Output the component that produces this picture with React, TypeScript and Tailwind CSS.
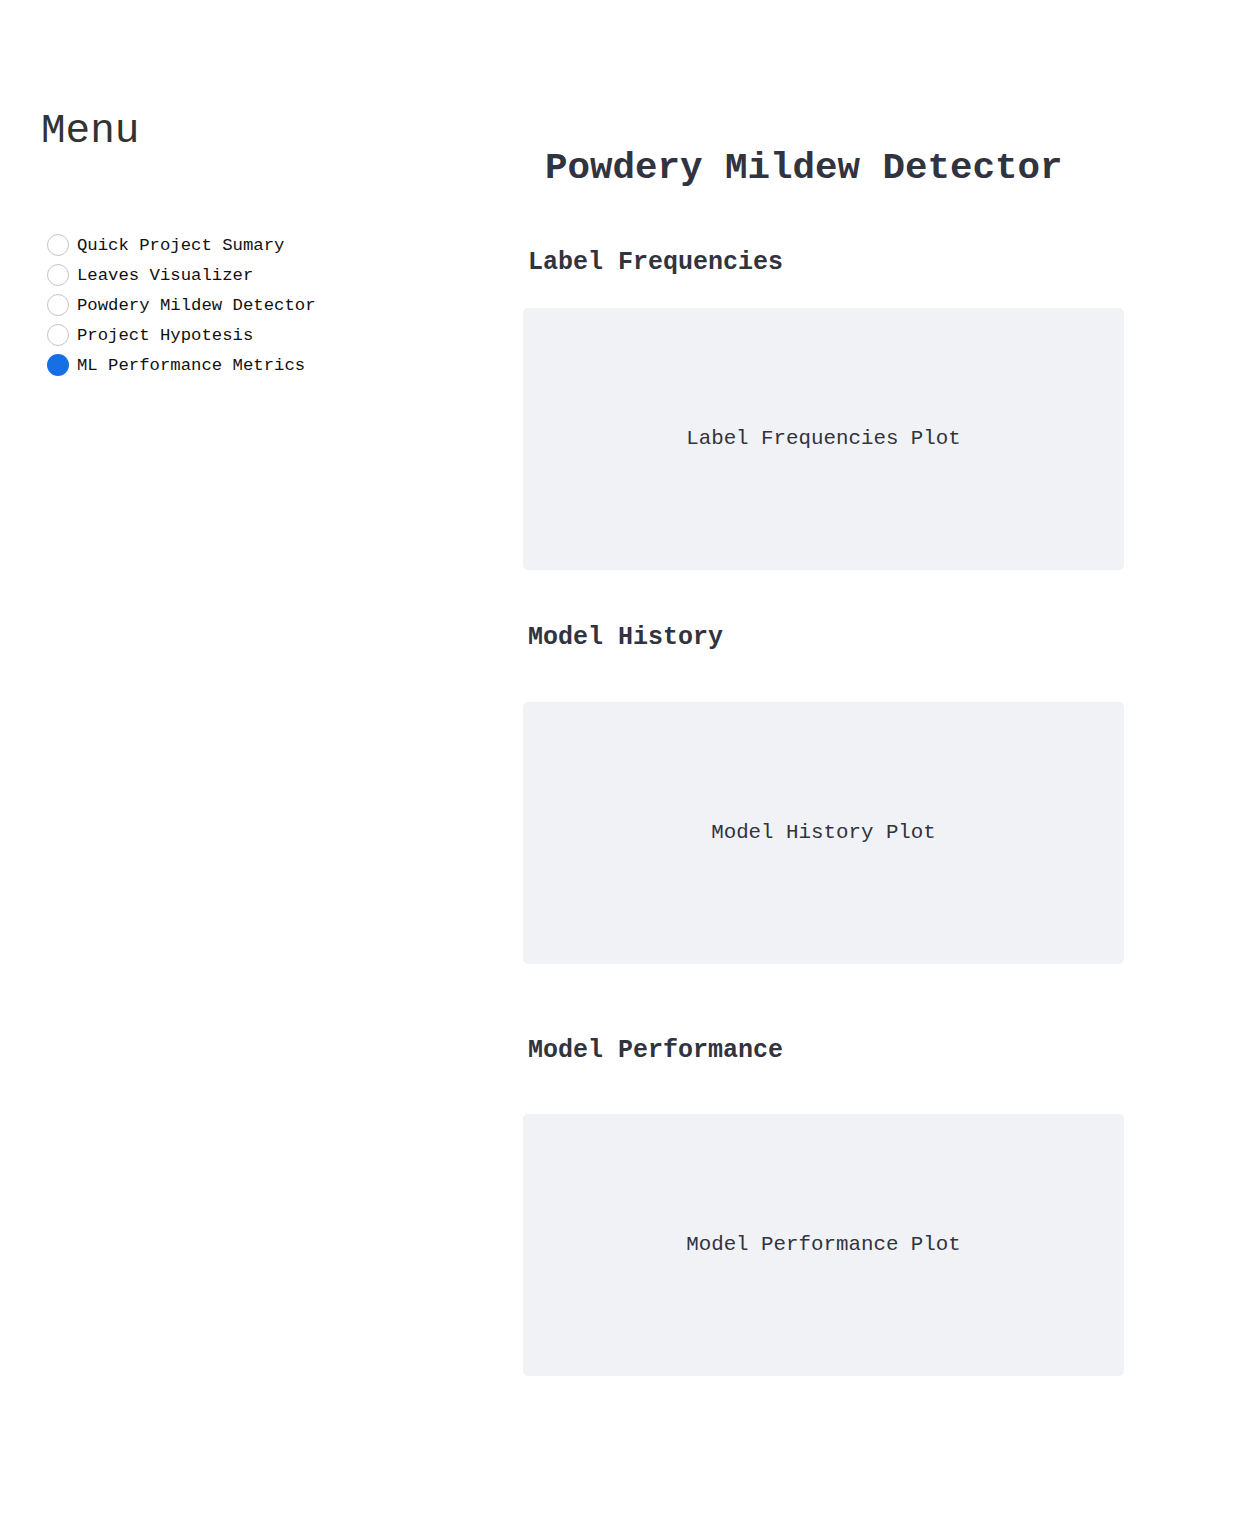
import React from "react";

const items = [
  "Quick Project Sumary",
  "Leaves Visualizer",
  "Powdery Mildew Detector",
  "Project Hypotesis",
  "ML Performance Metrics",
];

function Plot({ label }: { label: string }) {
  return (
    <div className="h-[262px] w-[601px] rounded-[5px] bg-[#f0f2f6] flex items-center justify-center">
      <span className="text-[20.8px] leading-none text-[#31333f]">{label}</span>
    </div>
  );
}

export default function App() {
  return (
    <div
      className="flex min-h-[1535px] w-[1240px] bg-white text-[#31333f]"
      style={{ fontFamily: '"Liberation Mono", monospace' }}
    >
      <aside className="w-[523px] shrink-0 pl-[41px]">
        <div className="mt-[111px] h-[40px] text-[41px] leading-[40px] text-[#333333]">Menu</div>
        <div className="mt-[80px] ml-[6px] flex flex-col">
          {items.map((it, i) => {
            const sel = i === items.length - 1;
            return (
              <div key={it} className="flex h-[30px] items-start gap-[8px]">
                <span
                  className={
                    sel
                      ? "mt-[3px] h-[22px] w-[22px] shrink-0 rounded-full bg-[#166fe5]"
                      : "mt-[3px] h-[22px] w-[22px] shrink-0 rounded-full border border-[#c4c4c4] bg-white"
                  }
                />
                <span className="text-[17.3px] leading-[30px] text-[#111111]">{it}</span>
              </div>
            );
          })}
        </div>
      </aside>
      <main className="flex flex-col pb-[159px]">
        <h1 className="mt-[149px] ml-[22px] h-[38px] text-[37.5px] font-bold leading-[38px] text-[#31333f]">
          Powdery Mildew Detector
        </h1>
        <h2 className="mt-[63px] ml-[5px] h-[25px] text-[25px] font-bold leading-[25px]">Label Frequencies</h2>
        <div className="mt-[33px]">
          <Plot label="Label Frequencies Plot" />
        </div>
        <h2 className="mt-[55px] ml-[5px] h-[25px] text-[25px] font-bold leading-[25px]">Model History</h2>
        <div className="mt-[52px]">
          <Plot label="Model History Plot" />
        </div>
        <h2 className="mt-[74px] ml-[5px] h-[25px] text-[25px] font-bold leading-[25px]">Model Performance</h2>
        <div className="mt-[51px]">
          <Plot label="Model Performance Plot" />
        </div>
      </main>
    </div>
  );
}
